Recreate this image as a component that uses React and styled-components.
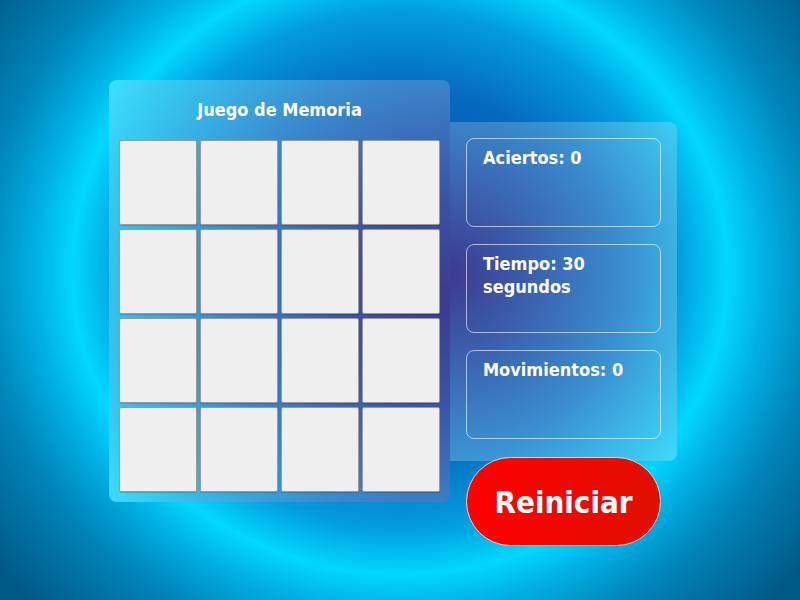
import React from 'react'
import styled, { createGlobalStyle } from 'styled-components'

const GlobalStyle = createGlobalStyle`
  html, body {
    margin: 0;
    padding: 0;
  }
  body {
    font-family: 'DejaVu Sans Condensed', 'DejaVu Sans', sans-serif;
  }
`

const stats = [
  { label: 'Aciertos', value: '0' },
  { label: 'Tiempo', value: '30 segundos' },
  { label: 'Movimientos', value: '0' }
]

const cards = Array.from({ length: 16 }, (_, i) => i)

const App = () => {
  return (
    <Page>
      <GlobalStyle />
      <Game>
        <Board>
          <Title>Juego de Memoria</Title>
          <Grid>
            {cards.map((id) => (
              <Card key={id} />
            ))}
          </Grid>
        </Board>
        <Side>
          <StatsPanel>
            {stats.map((s) => (
              <StatBox key={s.label}>{`${s.label}: ${s.value}`}</StatBox>
            ))}
          </StatsPanel>
          <ResetButton>Reiniciar</ResetButton>
        </Side>
      </Game>
    </Page>
  )
}

export default App

const Page = styled.div`
  width: 800px;
  height: 600px;
  overflow: hidden;
  box-sizing: border-box;
  padding: 80px 0 0 109px;
  background: radial-gradient(
    ellipse 420px 390px at 50% 45%,
    #0650a8 0%,
    #0668c0 46%,
    #039cdc 66%,
    #00d8ff 78%,
    #00b0e4 87%,
    #0084b8 100%,
    #005a86 122%
  );
`

const Game = styled.div`
  display: flex;
  align-items: flex-start;
`

const Board = styled.div`
  width: 341px;
  box-sizing: border-box;
  padding: 0 10px 10px;
  border-radius: 8px;
  background: radial-gradient(
    circle farthest-corner at 100% 52%,
    #3c3a8f 0%,
    #3b52a5 25%,
    #3a8ccf 58%,
    #36c4ee 85%,
    #3ee0ff 100%
  );
`

const Title = styled.h1`
  margin: 0;
  height: 60px;
  display: flex;
  align-items: center;
  justify-content: center;
  color: #fff;
  font-size: 18px;
  font-weight: bold;
  padding-bottom: 2px;
  box-sizing: border-box;
`

const Grid = styled.div`
  display: grid;
  grid-template-columns: repeat(4, 78px);
  grid-auto-rows: 85px;
  column-gap: 3px;
  row-gap: 4px;
`

const Card = styled.div`
  background: #efefef;
  border: 1px solid #9a9a9a;
  border-radius: 2px;
  box-shadow: 0 1px 1px rgba(0, 0, 0, 0.15);
`

const Side = styled.div`
  display: flex;
  flex-direction: column;
  margin-top: 42px;
`

const StatsPanel = styled.div`
  width: 227px;
  box-sizing: border-box;
  padding: 16px 16px 22px;
  display: flex;
  flex-direction: column;
  gap: 17px;
  border-radius: 0 8px 8px 0;
  background: radial-gradient(
    circle farthest-corner at 0% 45%,
    #3c3a8f 0%,
    #3b5cab 25%,
    #3a8fd0 60%,
    #3ddcfc 100%
  );
`

const StatBox = styled.div`
  height: 89px;
  box-sizing: border-box;
  padding: 7px 16px;
  border: 1px solid rgba(255, 255, 255, 0.6);
  border-radius: 8px;
  color: #fff;
  font-size: 18px;
  font-weight: bold;
  line-height: 23px;
`

const ResetButton = styled.button`
  margin: -4px 0 0 16px;
  width: 195px;
  height: 89px;
  border: 1px solid #d8d8d8;
  border-radius: 45px;
  background: linear-gradient(90deg, #ff0000, #e01000);
  color: #fff;
  font-family: inherit;
  font-size: 31px;
  font-weight: bold;
  cursor: pointer;
`
